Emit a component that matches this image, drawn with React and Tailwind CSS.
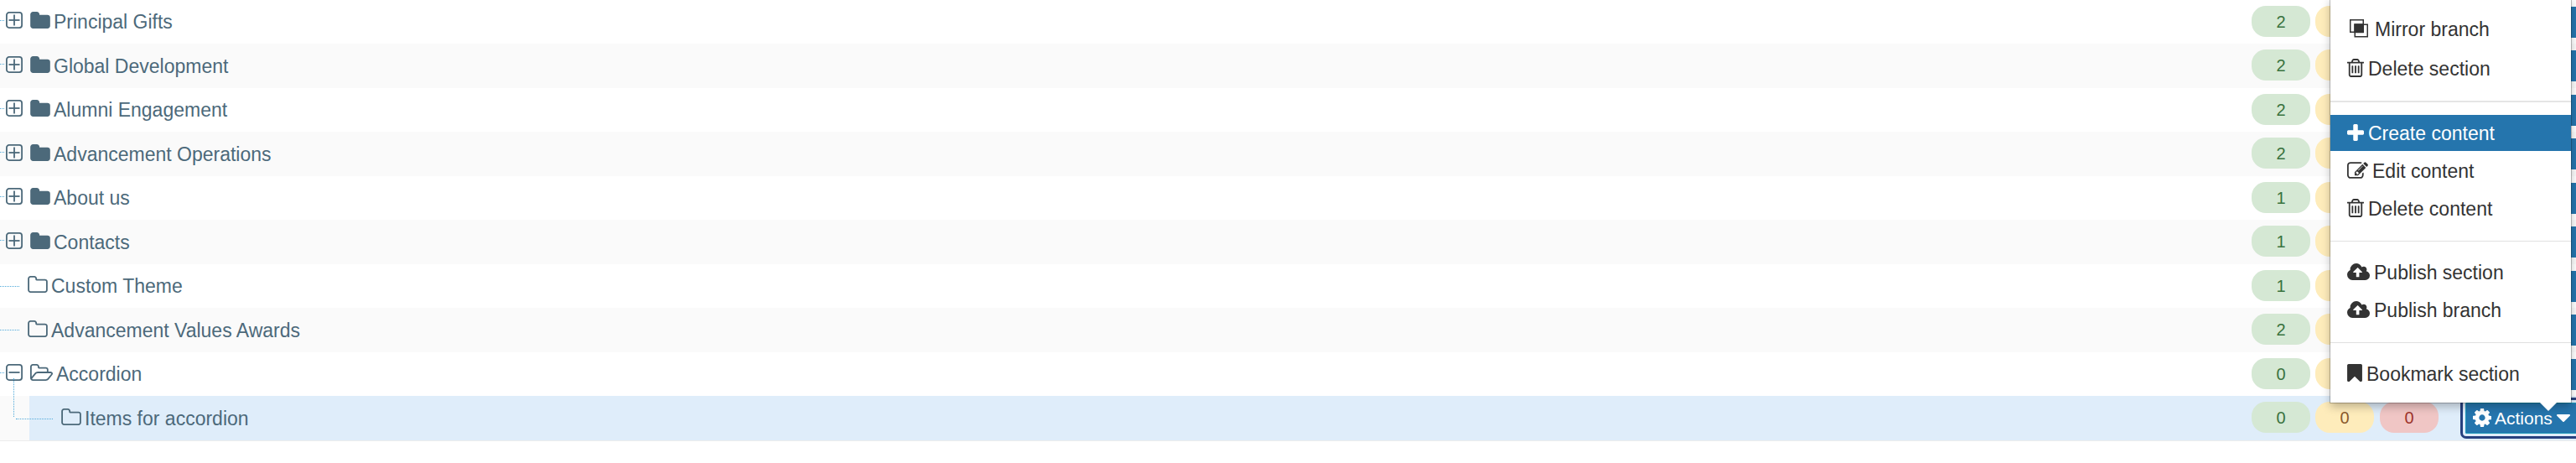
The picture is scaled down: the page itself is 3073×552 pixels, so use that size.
import clsx from 'clsx';

// viewBox + path for every glyph used in the tree and in the menu
const GLYPHS = {
  folder: {
    box: '64 128 1664 1408',
    d: 'M1728 608v704q0 92-66 158t-158 66h-1216q-92 0-158-66t-66-158v-960q0-92 66-158t158-66h320q92 0 158 66t66 158v32h672q92 0 158 66t66 158z',
  },
  folderOutline: {
    box: '64 128 1664 1408',
    d: 'M1600 1312v-704q0-40-28-68t-68-28h-704q-40 0-68-28t-28-68v-64q0-40-28-68t-68-28h-320q-40 0-68 28t-28 68v960q0 40 28 68t68 28h1216q40 0 68-28t28-68zm128-704v704q0 92-66 158t-158 66h-1216q-92 0-158-66t-66-158v-960q0-92 66-158t158-66h320q92 0 158 66t66 158v32h672q92 0 158 66t66 158z',
  },
  folderOpen: {
    box: '64 128 1909 1408',
    d: 'M1845 931q0-35-53-35h-1088q-40 0-85.5 21.5t-71.5 52.5l-294 363q-18 24-18 40 0 35 53 35h1088q40 0 86-22t71-53l294-363q18-22 18-39zm-1141-163h768v-160q0-40-28-68t-68-28h-576q-40 0-68-28t-28-68v-64q0-40-28-68t-68-28h-320q-40 0-68 28t-28 68v853l256-315q44-53 116-87.5t140-34.5zm1269 163q0 62-46 120l-295 363q-43 53-116 87.5t-140 34.5h-1088q-92 0-158-66t-66-158v-960q0-92 66-158t158-66h320q92 0 158 66t66 158v32h544q92 0 158 66t66 158v160h192q54 0 99 24.5t67 70.5q15 32 15 68z',
  },
  trash: {
    box: '192 128 1408 1536',
    d: 'M704 736v576q0 14-9 23t-23 9h-64q-14 0-23-9t-9-23v-576q0-14 9-23t23-9h64q14 0 23 9t9 23zm256 0v576q0 14-9 23t-23 9h-64q-14 0-23-9t-9-23v-576q0-14 9-23t23-9h64q14 0 23 9t9 23zm256 0v576q0 14-9 23t-23 9h-64q-14 0-23-9t-9-23v-576q0-14 9-23t23-9h64q14 0 23 9t9 23zm128 724v-948h-896v948q0 22 7 40.5t14.5 27 10.5 8.5h832q3 0 10.5-8.5t14.5-27 7-40.5zm-672-1076h448l-48-117q-7-9-17-11h-317q-10 2-17 11zm928 32v64q0 14-9 23t-23 9h-96v948q0 83-47 143.5t-113 60.5h-832q-66 0-113-58.5t-47-141.5v-952h-96q-14 0-23-9t-9-23v-64q0-14 9-23t23-9h309l70-167q15-37 54-63t79-26h320q40 0 79 26t54 63l70 167h309q14 0 23 9t9 23z',
  },
  plus: {
    box: '192 128 1408 1408',
    d: 'M1600 736v192q0 40-28 68t-68 28h-416v416q0 40-28 68t-68 28h-192q-40 0-68-28t-28-68v-416h-416q-40 0-68-28t-28-68v-192q0-40 28-68t68-28h416v-416q0-40 28-68t68-28h192q40 0 68 28t28 68v416h416q40 0 68 28t28 68z',
  },
  edit: {
    box: '0 128 1792 1408',
    d: 'M888 1184l116-116-152-152-116 116v56h96v96h56zm440-720q-16-16-33 1l-350 350q-17 17-1 33t33-1l350-350q17-17 1-33zm80 594v190q0 119-84.5 203.5t-203.5 84.5h-832q-119 0-203.5-84.5t-84.5-203.5v-832q0-119 84.5-203.5t203.5-84.5h832q63 0 117 25 15 7 18 23 3 17-9 29l-49 49q-14 14-32 8-23-6-45-6h-832q-66 0-113 47t-47 113v832q0 66 47 113t113 47h832q66 0 113-47t47-113v-126q0-13 9-22l64-64q15-15 35-7t20 29zm-96-738l288 288-672 672h-288v-288zm444 132l-92 92-288-288 92-92q28-28 68-28t68 28l152 152q28 28 28 68t-28 68z',
  },
  cloudUpload: {
    box: '-64 128 1920 1408',
    d: 'M1216 864q0-14-9-23l-352-352q-9-9-23-9t-23 9l-351 351q-10 12-10 24 0 14 9 23t23 9h224v352q0 13 9.5 22.5t22.5 9.5h192q13 0 22.5-9.5t9.5-22.5v-352h224q13 0 22.5-9.5t9.5-22.5zm640 288q0 159-112.5 271.5t-271.5 112.5h-1088q-185 0-316.5-131.5t-131.5-316.5q0-130 70-240t188-165q-2-30-2-43 0-212 150-362t362-150q156 0 285.5 87t188.5 231q71-62 166-62 106 0 181 75t75 181q0 76-41 138 130 31 213.5 135.5t83.5 238.5z',
  },
  bookmark: {
    box: '256 128 1280 1504',
    d: 'M1420 128q23 0 44 9 33 13 52.5 41t19.5 62v1289q0 34-19.5 62t-52.5 41q-19 8-44 8-48 0-83-32l-441-424-441 424q-36 33-83 33-23 0-44-9-33-13-52.5-41t-19.5-62v-1289q0-34 19.5-62t52.5-41q21-9 44-9h1048z',
  },
  cog: {
    box: '128 128 1536 1536',
    d: 'M1152 896q0-106-75-181t-181-75-181 75-75 181 75 181 181 75 181-75 75-181zm512-109v222q0 12-8 23t-20 13l-185 28q-19 54-39 91 35 50 107 138 10 12 10 25t-9 23q-27 37-99 108t-94 71q-12 0-26-9l-138-108q-44 23-91 38-16 136-29 186-7 28-36 28h-222q-14 0-24.5-8.5t-11.5-21.5l-28-184q-49-16-90-37l-141 107q-10 9-25 9-14 0-25-11-126-114-165-168-7-10-7-23 0-12 8-23 15-21 51-66.5t54-70.5q-27-50-41-99l-183-27q-13-2-21-12.5t-8-23.5v-222q0-12 8-23t19-13l186-28q14-46 39-92-40-57-107-138-10-12-10-24 0-10 9-23 26-36 98.5-107.5t94.5-71.5q13 0 26 10l138 107q44-23 91-38 16-136 29-186 7-28 36-28h222q14 0 24.5 8.5t11.5 21.5l28 184q49 16 90 37l142-107q9-9 24-9 13 0 25 10 129 119 165 170 7 8 7 22 0 12-8 23-15 21-51 66.5t-54 70.5q26 50 41 98l183 28q13 2 21 12.5t8 23.5z',
  },
  caret: {
    box: '384 640 1024 576',
    d: 'M1408 704q0 26-19 45l-448 448q-19 19-45 19t-45-19l-448-448q-19-19-19-45t19-45 45-19h896q26 0 45 19t19 45z',
  },
};

const Glyph = ({ name, className }) => (
  <svg
    viewBox={GLYPHS[name].box}
    className={clsx('shrink-0', className)}
    fill="currentColor"
    aria-hidden="true"
  >
    <path d={GLYPHS[name].d} />
  </svg>
);

const MirrorIcon = ({ className }) => (
  <svg viewBox="0 0 22 22" className={clsx('shrink-0', className)} fill="none" stroke="currentColor" strokeWidth="1.5" aria-hidden="true">
    <path d="M0.75 0.75h15.5v14.5h-15.5z" />
    <path d="M6.25 6.25h15v14.5h-15z" />
    <path d="M6 6h10v9.5h-10z" fill="currentColor" />
  </svg>
);

const Toggle = ({ open, label }) => (
  <button
    type="button"
    aria-label={`${open ? 'Collapse' : 'Expand'} ${label}`}
    aria-expanded={open}
    className="mb-1 ml-0.5 size-5 shrink-0"
  >
    <svg viewBox="0 0 20 20" className="size-5" fill="none" stroke="currentColor" strokeWidth="1.8">
      <rect x="0.9" y="0.9" width="18.2" height="18.2" rx="3" />
      <path d="M3.5 10h13" />
      {!open && <path d="M10 3.5v13" />}
    </svg>
  </button>
);

const sections = [
  { name: 'Principal Gifts', kind: 'closed', approved: 2 },
  { name: 'Global Development', kind: 'closed', approved: 2 },
  { name: 'Alumni Engagement', kind: 'closed', approved: 2 },
  { name: 'Advancement Operations', kind: 'closed', approved: 2 },
  { name: 'About us', kind: 'closed', approved: 1 },
  { name: 'Contacts', kind: 'closed', approved: 1 },
  { name: 'Custom Theme', kind: 'leaf', approved: 1 },
  { name: 'Advancement Values Awards', kind: 'leaf', approved: 2 },
  { name: 'Accordion', kind: 'open', approved: 0 },
  { name: 'Items for accordion', kind: 'child', approved: 0, pending: 0, inactive: 0 },
];

const SectionLabel = ({ section }) => {
  const { name, kind } = section;

  return (
    <div className="flex h-full min-w-0 flex-1 items-center">
      {(kind === 'closed' || kind === 'open') && (
        <>
          <span className="mb-1 w-[5px] border-t border-dotted border-[#4fa9da]" />
          <Toggle open={kind === 'open'} label={name} />
          {kind === 'open' ? (
            <Glyph name="folderOpen" className="mb-1 ml-[9px] h-5 w-[27px]" />
          ) : (
            <Glyph name="folder" className="mb-1 ml-[9px] h-5 w-6" />
          )}
        </>
      )}
      {kind === 'leaf' && (
        <>
          <span className="w-[23px] border-t border-dotted border-[#4fa9da]" />
          <Glyph name="folderOutline" className="mb-1 ml-2.5 h-5 w-6" />
        </>
      )}
      {kind === 'child' && (
        <Glyph name="folderOutline" className="mb-1 ml-[38px] h-5 w-6" />
      )}
      <a href="#section" className="ml-1 whitespace-nowrap text-[23px] leading-7">
        {name}
      </a>
    </div>
  );
};

const Count = ({ value, className }) => (
  <span
    className={clsx(
      'flex h-[37px] w-[70px] items-center justify-center rounded-[17px] text-xl leading-none',
      className
    )}
  >
    {value}
  </span>
);

const ActionsButton = ({ active }) => (
  <button
    type="button"
    aria-label="Actions"
    aria-haspopup="menu"
    aria-expanded={active}
    className={clsx(
      'mt-px ml-8 flex h-[37px] w-[134px] items-center border bg-[#2575ad] pl-2 text-[21px] leading-none text-white',
      active
        ? 'border-[#1b96b8] outline-3 outline-offset-3 outline-[#26407f] rounded-[1px]'
        : 'border-[#2575ad]'
    )}
  >
    {active && (
      <>
        <Glyph name="cog" className="mb-0.5 size-[22px]" />
        <span className="ml-1">Actions</span>
        <Glyph name="caret" className="ml-[5px] h-[9px] w-4" />
      </>
    )}
  </button>
);

const SectionRow = ({ section }) => {
  const isChild = section.kind === 'child';

  return (
    <li
      className={clsx(
        'relative odd:h-[52px] even:h-[53px] odd:bg-white even:bg-[#fafafa]',
        isChild && 'pl-[35px]'
      )}
    >
      {/* Branch lines that join a child to its parent */}
      {isChild && (
        <>
          <span className="absolute -top-[21px] left-4 h-[46px] border-l border-dotted border-[#4fa9da]" />
          <span className="absolute top-[27px] left-[19px] w-11 border-t border-dotted border-[#4fa9da]" />
        </>
      )}
      <div className={clsx('flex h-full items-start', isChild && 'bg-[#dfedfa]')}>
        <SectionLabel section={section} />
        <div className="-mr-0.5 flex shrink-0 items-start pt-[7px]">
          <Count value={section.approved} className="bg-[#d5e8d4] text-[#3a7340]" />
          <Count value={section.pending} className="ml-1.5 bg-[#feecbb] text-[#8a5a2c]" />
          <Count value={section.inactive} className="ml-[7px] bg-[#f0c6c5] text-[#9e342b]" />
          <ActionsButton active={isChild} />
        </div>
      </div>
    </li>
  );
};

const menuGroups = [
  [
    { label: 'Mirror branch', icon: <MirrorIcon className="mr-[3px] ml-[3px] size-[22px]" /> },
    { label: 'Delete section', icon: <Glyph name="trash" className="h-[22px] w-5" /> },
  ],
  [
    { label: 'Create content', icon: <Glyph name="plus" className="h-5 w-5" />, active: true },
    { label: 'Edit content', icon: <Glyph name="edit" className="h-5 w-[25px]" /> },
    { label: 'Delete content', icon: <Glyph name="trash" className="h-[22px] w-5" /> },
  ],
  [
    { label: 'Publish section', icon: <Glyph name="cloudUpload" className="h-5 w-[27px]" /> },
    { label: 'Publish branch', icon: <Glyph name="cloudUpload" className="h-5 w-[27px]" /> },
  ],
  [{ label: 'Bookmark section', icon: <Glyph name="bookmark" className="h-[21px] w-[18px]" /> }],
];

const ActionsMenu = () => (
  <div
    role="menu"
    className="absolute -top-1 right-1.5 z-10 w-[287px] bg-white pb-[13px] text-[#333] shadow-[0_0_0_1px_rgba(0,0,0,0.22),0_5px_10px_rgba(0,0,0,0.25)]"
  >
    {menuGroups.map((group, i) => (
      <div
        key={i}
        className={clsx(
          'flex flex-col',
          i === 0 && 'gap-1 pt-[17px]',
          i === 1 && 'mt-[17px] gap-0.5 border-t-2 border-[#e5e5e5] pt-[15px]',
          i > 1 && 'mt-[17px] gap-0.5 border-t border-[#e0e0e0] pt-[15px]'
        )}
      >
        {group.map((item) => (
          <button
            key={item.label}
            type="button"
            role="menuitem"
            className={clsx(
              'flex h-[43px] items-center gap-[5px] pl-5 text-[23px] leading-7',
              item.active && 'bg-[#2575ad] text-white'
            )}
          >
            <span className="mb-0.5 shrink-0">{item.icon}</span>
            <span className="whitespace-nowrap">{item.label}</span>
          </button>
        ))}
      </div>
    ))}
    <svg viewBox="0 0 20 10" className="absolute top-full right-[17px] h-2.5 w-5" aria-hidden="true">
      <path d="M0 0h20l-10 10z" fill="#fff" />
    </svg>
  </div>
);

const App = () => (
  <main className="relative overflow-hidden bg-white pb-[26px] font-['Liberation_Sans',Arial,sans-serif] text-[#4c697a]">
    <ul className="border-b border-[#ececec]">
      {sections.map((section) => (
        <SectionRow key={section.name} section={section} />
      ))}
    </ul>
    <ActionsMenu />
  </main>
);

export default App;
